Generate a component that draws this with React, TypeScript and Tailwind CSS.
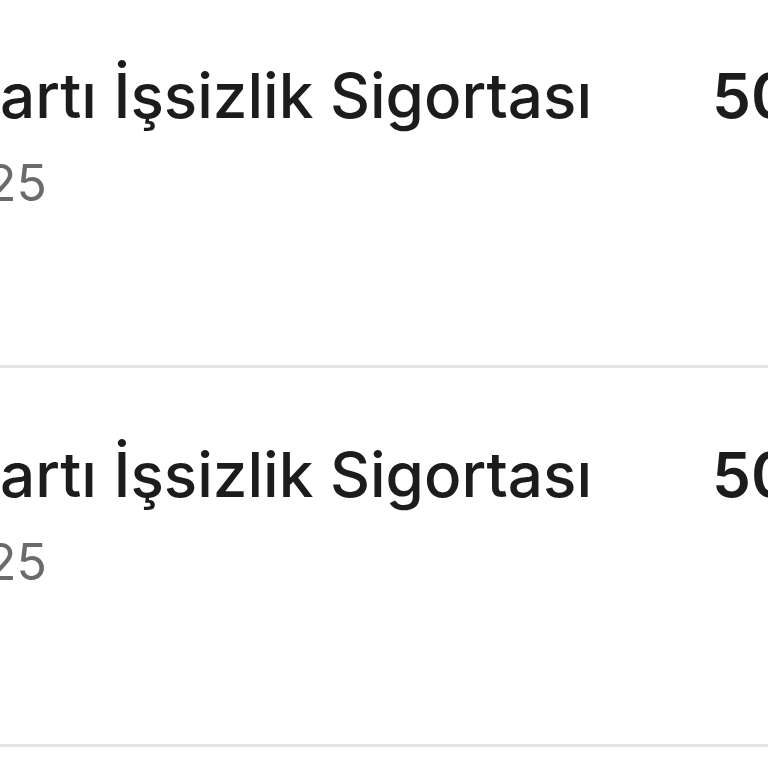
const rows = [
  { title: "artı İşsizlik Sigortası", date: "25", amount: "50,00 TL" },
  { title: "artı İşsizlik Sigortası", date: "25", amount: "50,00 TL" },
];

export default function App() {
  return (
    <div className="w-[768px] h-[768px] overflow-hidden bg-white font-['Inter',sans-serif]">
      <div className="-mt-[11px]">
        {rows.map((row, i) => (
          <div key={i}>
            <div className="h-[376px] flex pt-[71px]">
              <div className="w-[712px] shrink-0 flex flex-col">
                <p className="text-[62px] leading-[72px] font-medium text-[#1c1c1c] whitespace-nowrap">
                  {row.title}
                </p>
                <p className="-ml-[14px] mt-[20px] text-[50px] leading-[62px] font-normal text-[#6b6b6b] whitespace-nowrap">
                  {row.date}
                </p>
              </div>
              <p className="text-[62px] leading-[72px] font-semibold text-[#1c1c1c] whitespace-nowrap">
                {row.amount}
              </p>
            </div>
            <div className="h-[3px] bg-[#e5e5e5]" />
          </div>
        ))}
      </div>
    </div>
  );
}
